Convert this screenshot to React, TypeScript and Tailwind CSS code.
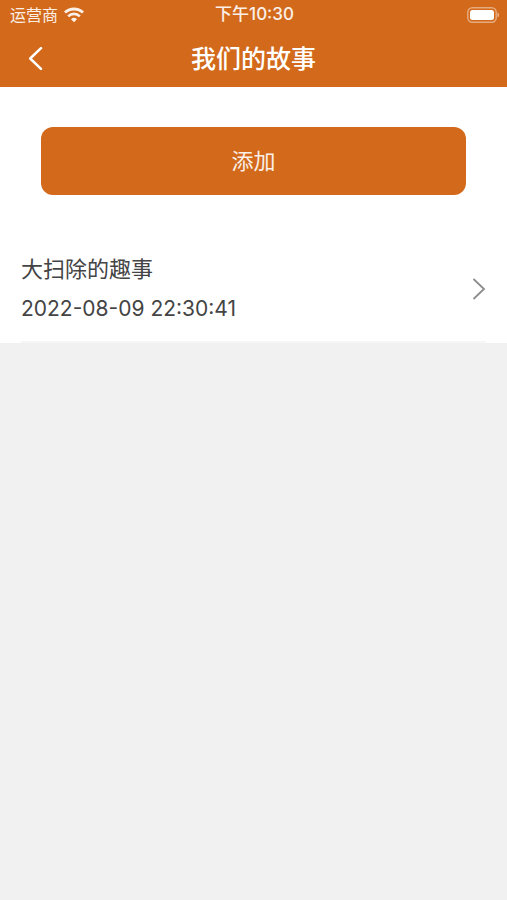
import { useState } from 'react';

interface Story {
  id: number;
  title: string;
  createdAt: string;
}

const initialStories: Story[] = [
  { id: 1, title: '大扫除的趣事', createdAt: '2022-08-09 22:30:41' },
];

function StatusBar() {
  return (
    <div className="grid h-[30px] grid-cols-3 items-center pr-2 pl-2.5 text-white/90">
      <div className="flex items-center gap-1.5">
        <span className="text-base">运营商</span>
        <svg className="h-4 w-5" viewBox="0 0 20 16" fill="none" stroke="currentColor" aria-hidden="true">
          <path d="M1 5.6a13 13 0 0 1 18 0" strokeWidth={2.8} />
          <path d="M4.2 9.3a8.2 8.2 0 0 1 11.6 0" strokeWidth={2.6} />
          <path d="M7 12.2a4.4 4.4 0 0 1 6 0L10 15.2z" fill="currentColor" stroke="none" />
        </svg>
      </div>
      <span className="text-center text-[17px] font-medium">下午10:30</span>
      <svg className="h-4 w-8 justify-self-end" viewBox="0 0 32 16" fill="none" aria-hidden="true">
        <rect x="0.8" y="0.8" width="28.4" height="14.4" rx="4.5" stroke="#fff" strokeOpacity={0.45} strokeWidth={1.4} />
        <rect x="3" y="3" width="24" height="10" rx="2.5" fill="#fff" />
        <path d="M30.5 5.5v5a2.7 2.7 0 0 0 0-5z" fill="#fff" fillOpacity={0.5} />
      </svg>
    </div>
  );
}

function Header({ title }: { title: string }) {
  return (
    <header className="bg-[#d2691b]">
      <StatusBar />
      <div className="grid h-[57px] grid-cols-[72px_1fr_72px] items-center text-white">
        <button type="button" aria-label="返回" className="flex h-full items-center pl-7">
          <svg className="h-6 w-4" viewBox="0 0 16 24" fill="none" stroke="currentColor" aria-hidden="true">
            <path d="M13 1.2 2.2 11.5 13 21.8" strokeWidth={2.5} strokeLinecap="round" strokeLinejoin="round" />
          </svg>
        </button>
        <h1 className="text-center text-[25px] leading-8 font-medium">{title}</h1>
      </div>
    </header>
  );
}

function StoryRow({ story }: { story: Story }) {
  return (
    <li className="px-[21px]">
      <a
        href={`#story-${story.id}`}
        className="flex items-center justify-between border-b-2 border-[#f6f6f6] pt-1 pb-3 text-[#444]"
      >
        <div>
          <p className="text-[22px] leading-10">{story.title}</p>
          <p className="text-[21px] leading-10">{story.createdAt}</p>
        </div>
        <svg className="h-6 w-4 text-[#8c8c8c]" viewBox="0 0 16 24" fill="none" stroke="currentColor" aria-hidden="true">
          <path d="M3.5 2 14 12 3.5 22" strokeWidth={1.8} />
        </svg>
      </a>
    </li>
  );
}

export default function App() {
  const [stories] = useState<Story[]>(initialStories);

  return (
    <div className="min-h-screen bg-[#f1f1f1] font-[Inter,'Noto_Sans_CJK_SC',sans-serif]">
      <Header title="我们的故事" />

      <main className="bg-white pt-10">
        <div className="px-[41px]">
          <button type="button" className="h-[68px] w-full rounded-xl bg-[#d2691b] text-[22px] text-white/90">
            添加
          </button>
        </div>

        <ul className="pt-[50px]">
          {stories.map((story) => (
            <StoryRow key={story.id} story={story} />
          ))}
        </ul>
      </main>
    </div>
  );
}
